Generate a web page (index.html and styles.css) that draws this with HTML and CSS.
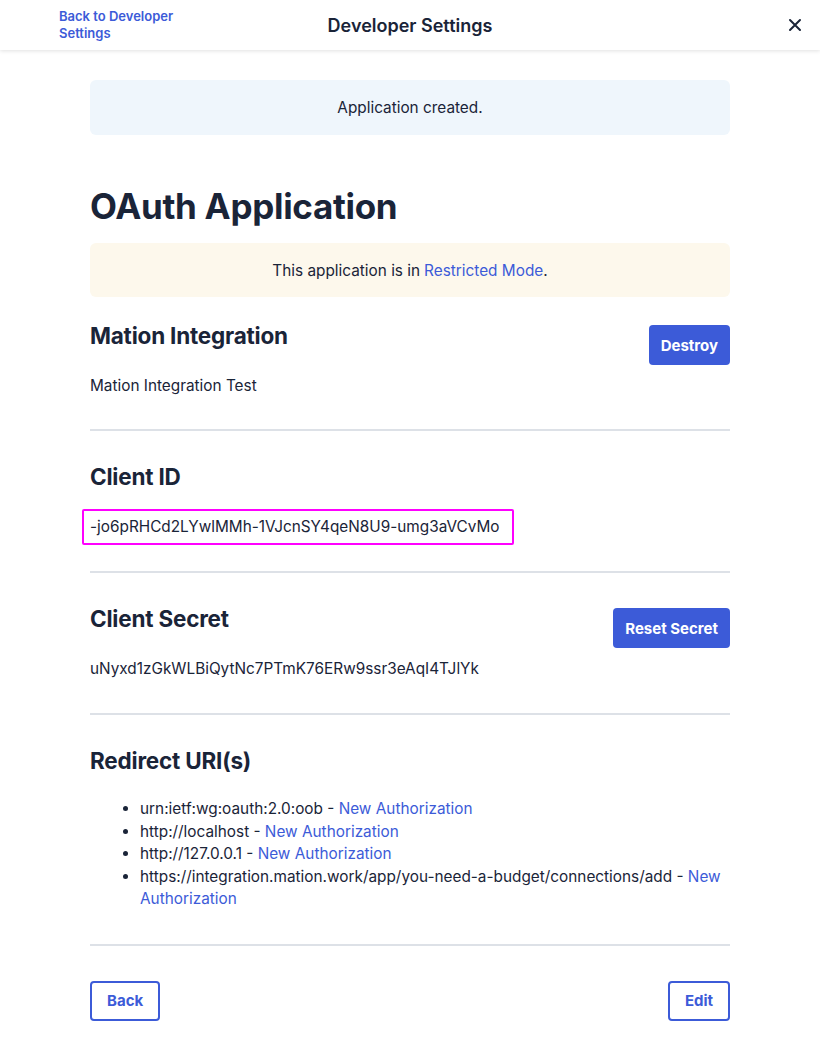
FILE: index.html
```html
<!DOCTYPE html>
<html>
<head>
  <title>OAuth Application - Developer Settings</title>
  <link rel="stylesheet" href="styles.css">
</head>
<body>
  <header class="topbar">
    <a class="topbar-back" href="#">Back to Developer Settings</a>
    <div class="topbar-title">Developer Settings</div>
    <button class="topbar-close" aria-label="Close">
      <svg width="14" height="14" viewBox="0 0 14 14"><path d="M2 2L12 12M12 2L2 12" stroke="#1a2438" stroke-width="2" stroke-linecap="round"/></svg>
    </button>
  </header>

  <main class="page">
    <div class="flash flash-notice">Application created.</div>

    <h1 class="page-title">OAuth Application</h1>

    <div class="flash flash-warning">This application is in <a href="#">Restricted Mode</a>.</div>

    <section class="section section-first">
      <div class="section-head">
        <h2 class="section-title">Mation Integration</h2>
        <button class="btn btn-primary">Destroy</button>
      </div>
      <p class="section-text">Mation Integration Test</p>
    </section>

    <section class="section section-boxed">
      <div class="section-head">
        <h2 class="section-title">Client ID</h2>
      </div>
      <p class="section-text"><span class="highlight">-jo6pRHCd2LYwlMMh-1VJcnSY4qeN8U9-umg3aVCvMo</span></p>
    </section>

    <section class="section">
      <div class="section-head">
        <h2 class="section-title">Client Secret</h2>
        <button class="btn btn-primary">Reset Secret</button>
      </div>
      <p class="section-text">uNyxd1zGkWLBiQytNc7PTmK76ERw9ssr3eAqI4TJlYk</p>
    </section>

    <section class="section">
      <div class="section-head">
        <h2 class="section-title">Redirect URI(s)</h2>
      </div>
      <ul class="uri-list">
        <li>urn:ietf:wg:oauth:2.0:oob - <a href="#">New Authorization</a></li>
        <li>http://localhost - <a href="#">New Authorization</a></li>
        <li>http://127.0.0.1 - <a href="#">New Authorization</a></li>
        <li>https://integration.mation.work/app/you-need-a-budget/connections/add - <a href="#">New Authorization</a></li>
      </ul>
    </section>

    <div class="actions">
      <button class="btn btn-outline">Back</button>
      <button class="btn btn-outline">Edit</button>
    </div>
  </main>
</body>
</html>
```

FILE: styles.css
```css
body {
  margin: 0;
  font-family: Inter, "Noto Sans", sans-serif;
  color: #1a2438;
  background: #fff;
}

a {
  color: #3c5bd8;
  text-decoration: none;
}

.topbar {
  height: 50px;
  display: grid;
  grid-template-columns: 1fr auto 1fr;
  align-items: center;
  padding: 0 15px 0 59px;
  box-shadow: 0 1px 4px rgba(0, 0, 0, 0.12);
}

.topbar-back {
  width: 140px;
  font-size: 13px;
  font-weight: 600;
  line-height: 17px;
  margin-top: -1px;
}

.topbar-title {
  text-align: center;
  font-size: 18px;
  font-weight: 600;
  margin-left: -44px;
  margin-top: 1px;
}

.topbar-close {
  justify-self: end;
  border: none;
  background: none;
  padding: 0;
  width: 20px;
  height: 20px;
  display: flex;
  align-items: center;
  justify-content: center;
  cursor: pointer;
}

.page {
  width: 640px;
  margin: 0 auto;
  padding-top: 30px;
  font-size: 15.35px;
}

.flash {
  border-radius: 6px;
  text-align: center;
  height: 55px;
  display: flex;
  align-items: center;
  justify-content: center;
}

.flash-notice {
  background: #eff6fc;
}

.flash-warning {
  background: #fdf8ec;
  height: 54px;
}

.flash-warning a {
  margin-left: 4px;
}

.page-title {
  font-size: 35px;
  font-weight: 700;
  margin: 49px 0 15px;
  line-height: 44px;
  letter-spacing: -0.3px;
}

.section {
  border-bottom: 2px solid #dde1e7;
  padding: 32px 0 33px;
}

.section-first {
  padding: 25px 0 32px;
}

.section-boxed {
  padding-bottom: 26px;
}

.section-head {
  display: flex;
  justify-content: space-between;
  align-items: flex-start;
  min-height: 43px;
}

.section-title {
  font-size: 22.5px;
  font-weight: 700;
  margin: 0;
  line-height: 28px;
  letter-spacing: -0.2px;
}

.section-text {
  margin: 10px 0 0;
  line-height: 22px;
}

.section-boxed .section-text {
  margin-top: 3px;
}

.highlight {
  display: block;
  width: fit-content;
  margin-left: -8px;
  padding: 5px 12px 5px 6px;
  border: 2px solid #ff00ff;
  border-radius: 2px;
}

.uri-list {
  margin: 8px 0 0;
  padding-left: 50px;
  line-height: 22.5px;
}

.btn {
  font-family: inherit;
  font-size: 15px;
  font-weight: 700;
  height: 40px;
  margin-top: 3px;
  padding: 0 12px;
  border-radius: 4px;
  cursor: pointer;
}

.btn-primary {
  background: #3c5bd8;
  color: #fff;
  border: none;
}

.btn-outline {
  margin-top: 0;
  background: #fff;
  color: #3c5bd8;
  border: 2px solid #3c5bd8;
  padding: 0 15px;
}

.actions {
  display: flex;
  justify-content: space-between;
  padding-top: 35px;
}
```
